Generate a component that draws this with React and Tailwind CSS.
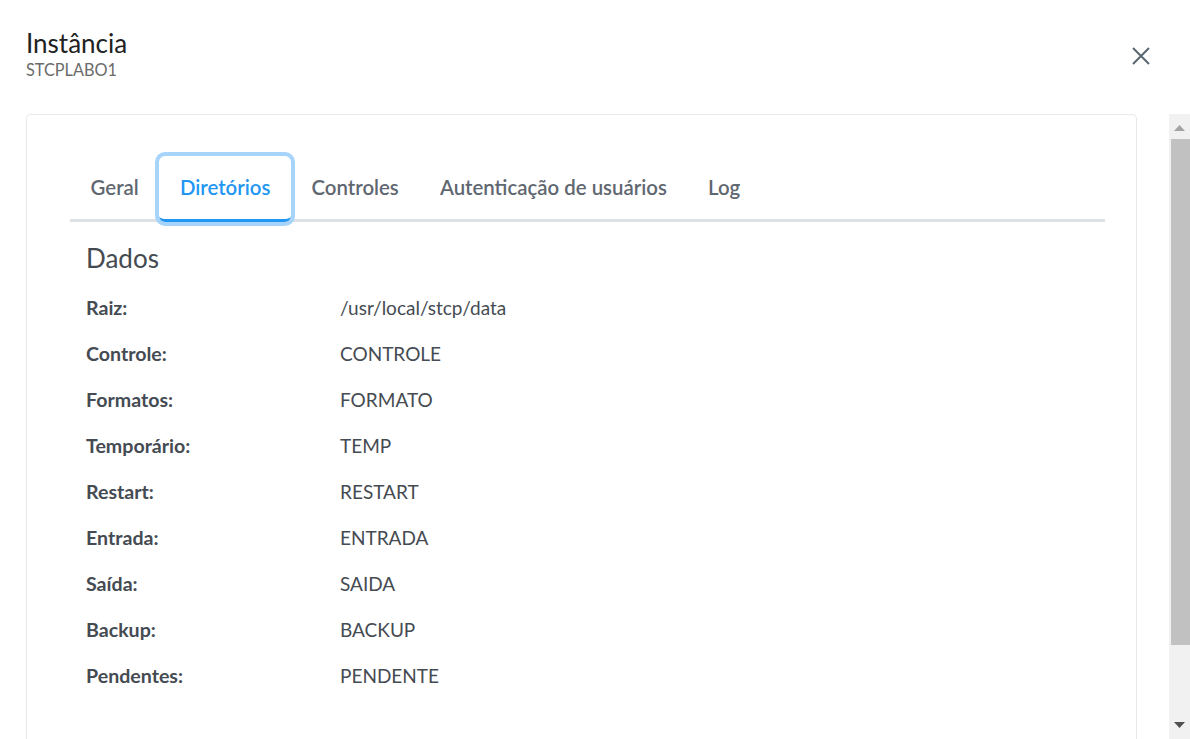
import React from "react";

const rows = [
  ["Raiz:", "/usr/local/stcp/data"],
  ["Controle:", "CONTROLE"],
  ["Formatos:", "FORMATO"],
  ["Temporário:", "TEMP"],
  ["Restart:", "RESTART"],
  ["Entrada:", "ENTRADA"],
  ["Saída:", "SAIDA"],
  ["Backup:", "BACKUP"],
  ["Pendentes:", "PENDENTE"],
];

const tabs = ["Geral", "Diretórios", "Controles", "Autenticação de usuários", "Log"];

export default function App() {
  return (
    <div
      className="w-[1190px] h-[739px] bg-white overflow-hidden flex flex-col"
      style={{ fontFamily: "Lato, 'Noto Sans', sans-serif" }}
    >
      <div className="flex items-start justify-between pl-[26px] pr-[40px] pt-[27px] h-[114px]">
        <div className="flex flex-col">
          <div className="text-[26px] leading-[32px] text-[#222]">Instância</div>
          <div className="text-[16.3px] leading-[20px] text-[#6b6b6b] mt-[1px]">STCPLABO1</div>
        </div>
        <button className="mt-[20px] w-[18px] h-[18px] flex items-center justify-center">
          <svg width="18" height="18" viewBox="0 0 18 18">
            <path d="M1 1 L17 17 M17 1 L1 17" stroke="#5b6770" strokeWidth="2" fill="none" />
          </svg>
        </button>
      </div>
      <div className="flex flex-1 min-h-0">
        <div className="flex-1 ml-[26px] mr-[32px] border border-[#e8e8e8] border-b-0 rounded-t-[5px] pl-[43px] pr-[31px] pt-[41px]">
          <div className="flex border-b-[3px] border-[#dee2e6]">
            {tabs.map((t, i) => {
              const active = i === 1;
              return (
                <div
                  key={t}
                  className={
                    active
                      ? "px-[20.6px] h-[66px] -mb-[3px] flex items-center border-b-[3px] border-[#2196f3] text-[#2196f3] text-[20.4px] font-semibold rounded-[6px] outline-[4px] outline-solid outline-[#a6d4fa]"
                      : "px-[20.6px] h-[66px] -mb-[3px] flex items-center border-b-[3px] border-transparent text-[#5f6771] text-[20.4px] font-semibold"
                  }
                >
                  <span>{t}</span>
                </div>
              );
            })}
          </div>
          <div className="pl-[16px]">
            <div className="mt-[21px] text-[26px] leading-[30px] text-[#444a50]">Dados</div>
            <div className="mt-[12px] flex flex-col">
              {rows.map(([l, v]) => (
                <div key={l} className="h-[46px] flex items-center text-[19px] text-[#454b52]">
                  <div className="w-[254px] font-bold text-[19.6px]">{l}</div>
                  <div>{v}</div>
                </div>
              ))}
            </div>
          </div>
        </div>
        <div className="w-[21px] bg-[#f1f1f1] flex flex-col items-end">
          <div className="h-[25px] w-full flex items-center justify-center pt-[3px]">
            <svg width="11" height="6" viewBox="0 0 11 6">
              <path d="M5.5 0 L11 6 L0 6 Z" fill="#a3a3a3" />
            </svg>
          </div>
          <div className="w-[19px] h-[506px] bg-[#c1c1c1]" />
          <div className="flex-1" />
          <div className="h-[25px] w-full flex items-center justify-center pb-[4px]">
            <svg width="11" height="6" viewBox="0 0 11 6">
              <path d="M0 0 L11 0 L5.5 6 Z" fill="#505050" />
            </svg>
          </div>
        </div>
      </div>
    </div>
  );
}
